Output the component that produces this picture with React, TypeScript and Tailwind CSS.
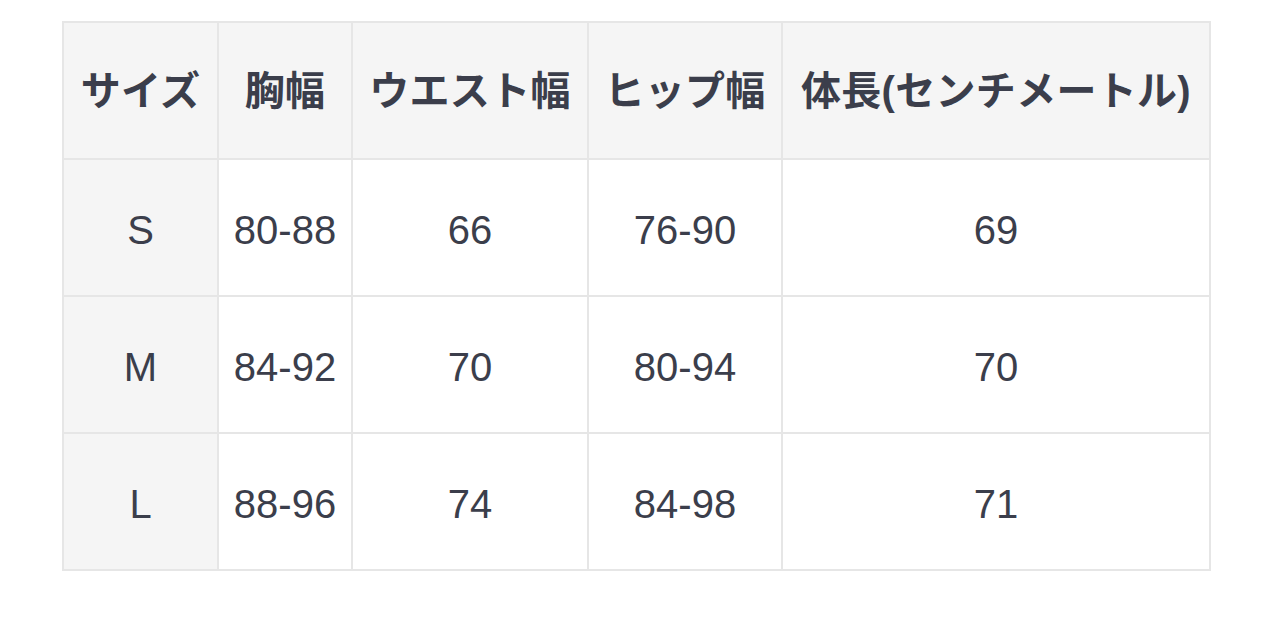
const headers = ['サイズ', '胸幅', 'ウエスト幅', 'ヒップ幅', '体長(センチメートル)']
const widths = ['w-[155px]', 'w-[134px]', 'w-[236px]', 'w-[194px]', 'w-[428px]']

const rows = [
  ['S', '80-88', '66', '76-90', '69'],
  ['M', '84-92', '70', '80-94', '70'],
  ['L', '88-96', '74', '84-98', '71'],
]

export default function App() {
  return (
    <div className="min-h-[618px] bg-white pl-[62px] pt-[21px] font-['Liberation_Sans','Noto_Sans_CJK_JP',sans-serif] text-[#3b3e4b]">
      <table className="table-fixed border-collapse border-2 border-[#e6e6e6]">
        <thead>
          <tr className="h-[137px] bg-[#f5f5f5]">
            {headers.map((h, i) => (
              <th
                key={h}
                className={`${widths[i]} border-2 border-[#e6e6e6] p-0 text-center text-[40px] font-bold tracking-[0.3px]`}
              >
                {h}
              </th>
            ))}
          </tr>
        </thead>
        <tbody>
          {rows.map((r) => (
            <tr key={r[0]} className="h-[137px]">
              {r.map((c, i) => (
                <td
                  key={i}
                  className={`border-2 border-[#e6e6e6] p-0 pt-[4px] text-center text-[40px] ${i === 0 ? 'bg-[#f5f5f5]' : 'bg-white'}`}
                >
                  {c}
                </td>
              ))}
            </tr>
          ))}
        </tbody>
      </table>
    </div>
  )
}
